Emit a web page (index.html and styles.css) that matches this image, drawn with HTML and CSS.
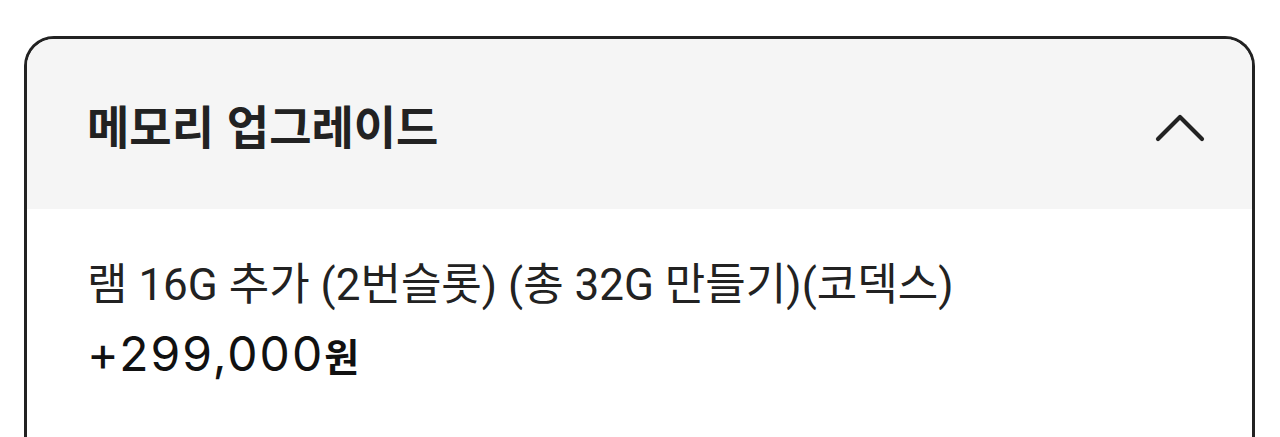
FILE: index.html
```html
<!DOCTYPE html>
<html lang="ko">
<head>
<meta charset="utf-8">
<link rel="stylesheet" href="styles.css">
</head>
<body>
<div class="card">
  <div class="card-header">
    <h2 class="title">메모리 업그레이드</h2>
    <svg class="chevron" width="52" height="34" viewBox="0 0 52 34" aria-hidden="true">
      <path d="M3 30 L25 8 L47 30" fill="none" stroke="#222" stroke-width="4.2" stroke-linecap="round" stroke-linejoin="round"/>
    </svg>
  </div>
  <div class="option">
    <div class="option-name">램 16G 추가 (2번슬롯) (총 32G 만들기)(코덱스)</div>
    <div class="option-price"><span class="num">+299,000</span><span class="won">원</span></div>
  </div>
  <div class="divider"></div>
  <div class="rest"></div>
</div>
</body>
</html>
```
FILE: styles.css
```css
html, body {
  margin: 0;
  padding: 0;
  background: #ffffff;
  overflow: hidden;
}
body {
  padding: 36px 25px 0 24px;
  font-family: Roboto, "Noto Sans CJK KR", sans-serif;
  color: #222222;
}
.card {
  border: 3px solid #222222;
  border-bottom: none;
  border-radius: 30px 30px 0 0;
  overflow: hidden;
  background: #ffffff;
}
.card-header {
  height: 170px;
  background: #f5f5f5;
  display: flex;
  align-items: center;
  justify-content: space-between;
  padding: 0 45px 0 60px;
}
.title {
  margin: 0;
  font-family: "Noto Sans CJK KR", sans-serif;
  font-weight: 700;
  font-size: 46px;
  line-height: 54px;
  color: #222222;
}
.chevron {
  display: block;
  margin-top: 4px;
}
.option {
  padding: 50px 60px 46px 60px;
}
.option-name {
  font-family: Roboto, "Noto Sans CJK KR", sans-serif;
  font-size: 44px;
  line-height: 52px;
  color: #222222;
  white-space: nowrap;
}
.option-price {
  margin-top: 13px;
  line-height: 60px;
  color: #111111;
  white-space: nowrap;
}
.option-price .num {
  font-family: Inter, Roboto, sans-serif;
  font-size: 48px;
  font-weight: 400;
  letter-spacing: 2px;
}
.option-price .won {
  font-family: "Noto Sans CJK KR", sans-serif;
  font-size: 38px;
  font-weight: 700;
  margin-left: 0;
}
.divider {
  height: 2px;
  background: #f0f0f0;
  margin: 0 3px;
}
.rest {
  height: 200px;
}
```
